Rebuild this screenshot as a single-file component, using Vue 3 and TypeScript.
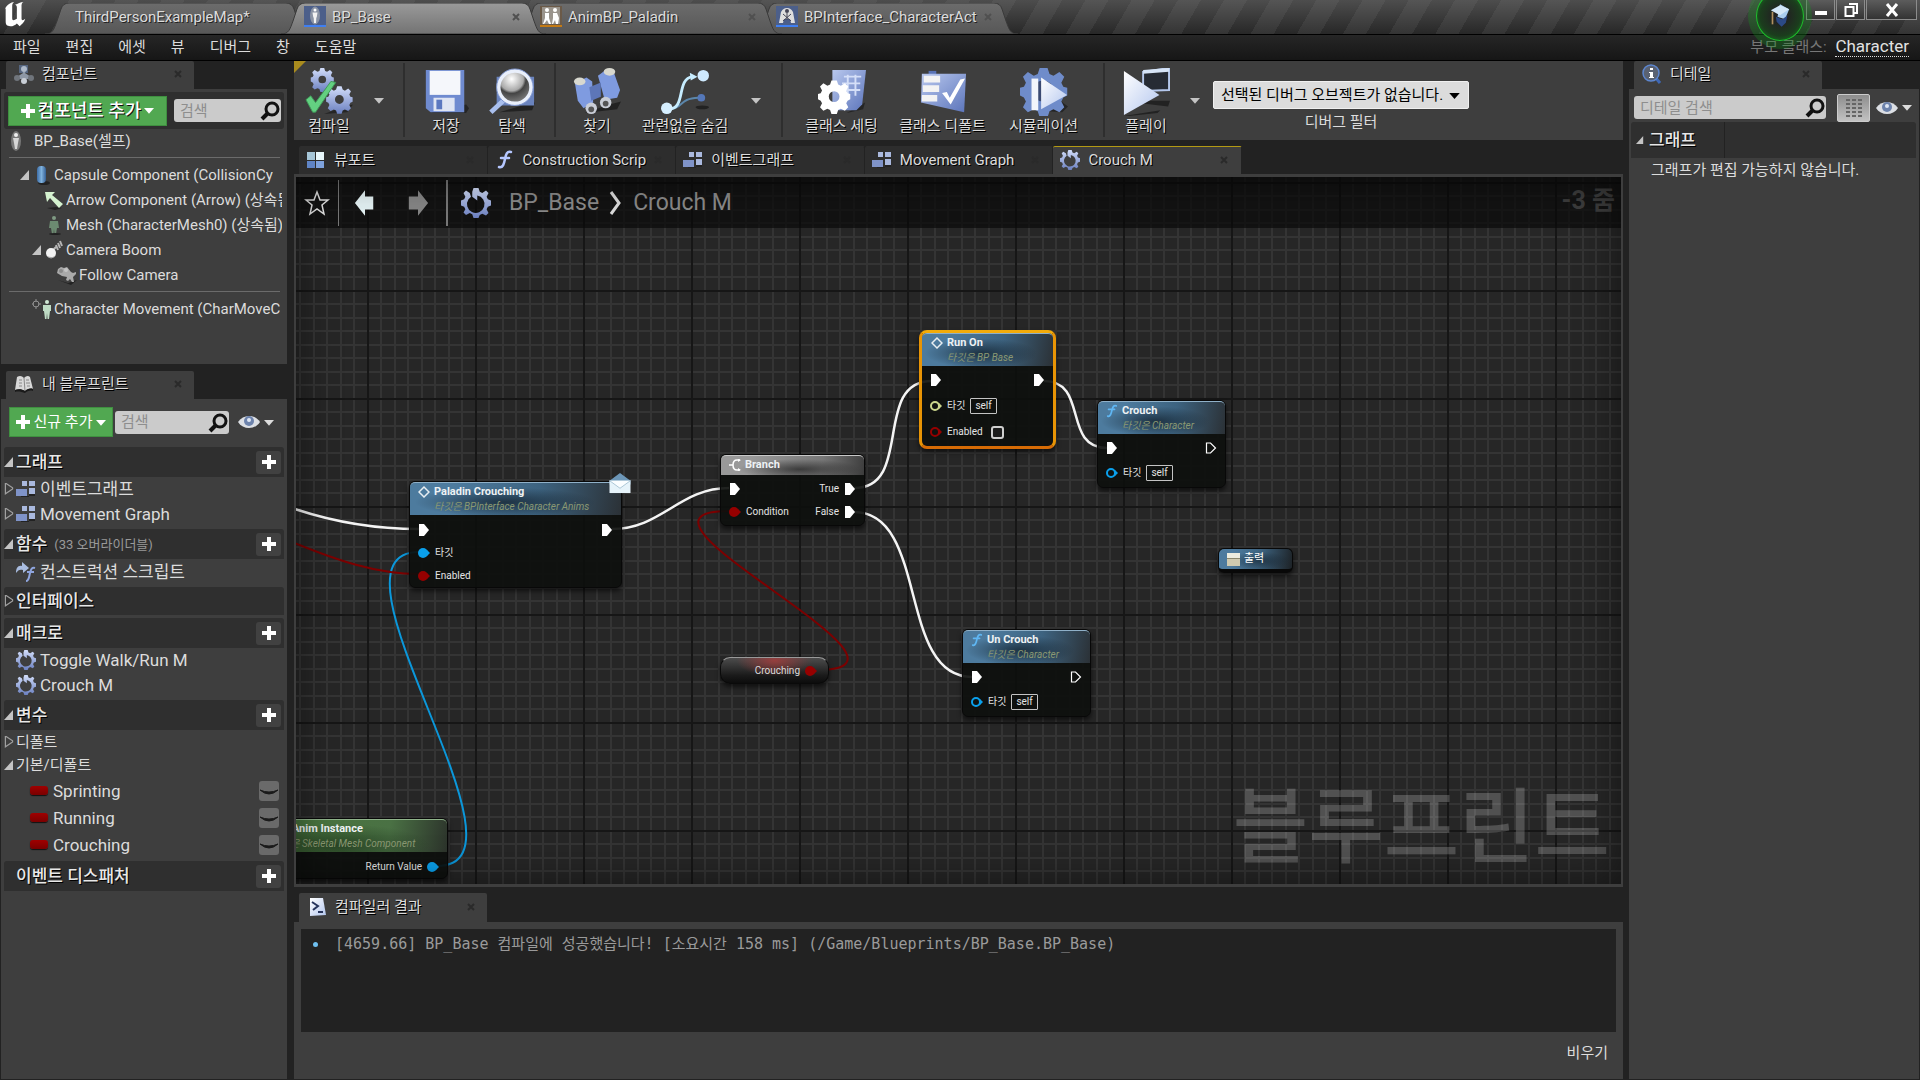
<script setup lang="ts">
import { ref } from 'vue'

interface DocTab { title: string; icon?: string; active?: boolean; closable: boolean; order: number }
interface GraphTab { title: string; icon: string; active?: boolean }
interface TreeRow { label: string; icon: string; depth: string; open?: boolean }
interface Pin { kind: string; label?: string; self?: boolean; check?: boolean }
interface PinRow { left?: Pin; right?: Pin }
interface GraphNode {
  id: string
  x: number
  y: number
  w: number
  title: string
  sub?: string
  icon?: string
  tone: string
  rows: PinRow[]
  selected?: boolean
  size: string
}

const docTabs: DocTab[] = [
  { title: 'ThirdPersonExampleMap*', closable: false, order: 4 },
  { title: 'BP_Base', icon: 'doc-blueprint', active: true, closable: true, order: 5 },
  { title: 'AnimBP_Paladin', icon: 'doc-anim', closable: true, order: 3 },
  { title: 'BPInterface_CharacterAct', icon: 'doc-interface', closable: true, order: 2 },
]

const menus: string[] = ['파일', '편집', '에셋', '뷰', '디버그', '창', '도움말']

const inherited: TreeRow[] = [
  { label: 'Capsule Component (CollisionCy', icon: 'capsule', depth: 'd1', open: true },
  { label: 'Arrow Component (Arrow) (상속됨)', icon: 'arrow', depth: 'd2' },
  { label: 'Mesh (CharacterMesh0) (상속됨)', icon: 'mesh', depth: 'd2' },
  { label: 'Camera Boom', icon: 'boom', depth: 'd2', open: true },
  { label: 'Follow Camera', icon: 'camera', depth: 'd3' },
]

const graphTabs: GraphTab[] = [
  { title: '뷰포트', icon: 'viewport' },
  { title: 'Construction Scrip', icon: 'func' },
  { title: '이벤트그래프', icon: 'graph' },
  { title: 'Movement Graph', icon: 'graph' },
  { title: 'Crouch M', icon: 'macro', active: true },
]

const variables: string[] = ['Sprinting', 'Running', 'Crouching']

const nodes: GraphNode[] = [
  {
    id: 'paladin', x: 113, y: 304, w: 213, title: 'Paladin Crouching', sub: '타깃은 BPInterface Character Anims',
    icon: 'event', tone: 'blue', size: 'compact',
    rows: [
      { left: { kind: 'exec' }, right: { kind: 'exec' } },
      { left: { kind: 'object', label: '타깃' } },
      { left: { kind: 'bool', label: 'Enabled' } },
    ],
  },
  {
    id: 'branch', x: 424, y: 277, w: 145, title: 'Branch', icon: 'branch', tone: 'grey', size: 'compact',
    rows: [
      { left: { kind: 'exec' }, right: { kind: 'exec', label: 'True' } },
      { left: { kind: 'bool', label: 'Condition' }, right: { kind: 'exec', label: 'False' } },
    ],
  },
  {
    id: 'run-on', x: 623, y: 153, w: 137, title: 'Run On', sub: '타깃은 BP Base', icon: 'event', tone: 'blue',
    size: 'tall', selected: true,
    rows: [
      { left: { kind: 'exec' }, right: { kind: 'exec' } },
      { left: { kind: 'self-open', label: '타깃', self: true } },
      { left: { kind: 'bool-open', label: 'Enabled', check: true } },
    ],
  },
  {
    id: 'crouch', x: 801, y: 223, w: 129, title: 'Crouch', sub: '타깃은 Character', icon: 'func-blue', tone: 'blue',
    size: 'tall',
    rows: [
      { left: { kind: 'exec' }, right: { kind: 'exec-open' } },
      { left: { kind: 'object-open', label: '타깃', self: true } },
    ],
  },
  {
    id: 'un-crouch', x: 666, y: 452, w: 129, title: 'Un Crouch', sub: '타깃은 Character', icon: 'func-blue',
    tone: 'blue', size: 'tall',
    rows: [
      { left: { kind: 'exec' }, right: { kind: 'exec-open' } },
      { left: { kind: 'object-open', label: '타깃', self: true } },
    ],
  },
  {
    id: 'anim', x: -49, y: 641, w: 201, title: 'Get Anim Instance', sub: '타깃은 Skeletal Mesh Component',
    icon: 'func-blue', tone: 'green', size: 'compact',
    rows: [{ right: { kind: 'object', label: 'Return Value' } }],
  },
]

const componentQuery = ref('')
const memberQuery = ref('')
const detailQuery = ref('')
const enabled = ref(false)
const debugTarget = ref('none')
</script>

<template>
  <div class="editor">
    <svg class="defs" width="0" height="0" aria-hidden="true">
      <defs>
        <linearGradient id="gBlue" x1="0" y1="0" x2="0" y2="1">
          <stop offset="0" stop-color="#d3defa" /><stop offset="1" stop-color="#6a7fc0" />
        </linearGradient>
        <linearGradient id="gIce" x1="0" y1="0" x2="1" y2="1">
          <stop offset="0" stop-color="#ffffff" /><stop offset="1" stop-color="#b3c6ee" />
        </linearGradient>
        <linearGradient id="gTab" x1="0" y1="0" x2="0" y2="1">
          <stop offset="0" stop-color="#6c6c6c" /><stop offset="1" stop-color="#575757" />
        </linearGradient>
        <linearGradient id="gTabOn" x1="0" y1="0" x2="0" y2="1">
          <stop offset="0" stop-color="#9a9a9a" /><stop offset="1" stop-color="#737373" />
        </linearGradient>
        <linearGradient id="gPaper" x1="0" y1="0" x2="1" y2="1">
          <stop offset="0" stop-color="#b9c8ee" /><stop offset="1" stop-color="#5c75bb" />
        </linearGradient>
        <radialGradient id="gLens" cx=".4" cy=".25" r=".8">
          <stop offset="0" stop-color="#fff" /><stop offset=".45" stop-color="#a9a9a9" /><stop offset=".55" stop-color="#444" /><stop offset="1" stop-color="#888" />
        </radialGradient>
        <linearGradient id="gCap" x1="0" y1="0" x2="1" y2="0">
          <stop offset="0" stop-color="#3d6ea8" /><stop offset=".5" stop-color="#7fb1dc" /><stop offset="1" stop-color="#345f94" />
        </linearGradient>
        <g id="cog">
          <path d="M10 0h4l1 3 2 1 3-2 2.500 2.500-1.500 3 1 2 2 .5v4l-2 1-1 2 1.500 3-2.500 2.500-3-1.500-2 1-1 3h-4l-1-3-2-1-3 1.500L1.500 20 3 17l-1-2-2-1v-4l2-.5 1-2-1.500-3L4 2l3 2 2-1zM12 8a4 4 0 1 0 0 8 4 4 0 0 0 0-8z" fill-rule="evenodd" />
        </g>
      </defs>
      <symbol id="unreal" viewBox="0 0 24 30">
        <path d="M1 9C3 4 8 1 11 1c-1 1-2 2-2 4v14c0 2 2 2 5 0V7c0-2-1-3-2-3 3-1 6-3 9-3-2 1-2 3-2 5v13c0 2 2 2 4 0-1 4-4 6-6 8l-3-3c-2 2-4 3-7 3-4 0-5-2-5-5V8C3 7 2 8 1 9z" fill="#fff" />
      </symbol>
      <symbol id="doc-blueprint" viewBox="0 0 22 22">
        <path d="M0 0h22v19H0z" fill="#4c5f8a" /><ellipse cx="11" cy="9.500" rx="5" ry="9" fill="#8a93a4" /><path d="M0 19h22v2H0z" fill="#3f7ff2" />
        <circle cx="11" cy="4" r="1.500" fill="#fff" /><path d="M8.500 6.500h5l-.8 5h-.4L12 17h-2l-.3-5.500h-.4z" fill="#f2f2f2" />
      </symbol>
      <symbol id="doc-anim" viewBox="0 0 22 22">
        <path d="M0 0h22v19H0z" fill="#6b5a48" /><path d="M2 1h18v17H2z" fill="#9a948c" /><path d="M0 19h22v2H0z" fill="#c47a14" />
        <circle cx="7" cy="4" r="2" fill="#fff" /><circle cx="15" cy="4" r="2" fill="#fff" /><path d="M5 7h4v5l2 6H9l-2-4-3 4H3l2-6zm8 0h4l2 5-1 6h-2l-1-4-2 4h-1l1-6z" fill="#fff" />
      </symbol>
      <symbol id="doc-interface" viewBox="0 0 22 22">
        <path d="M0 0h22v19H0z" fill="#4c5f8a" /><path d="M0 19h22v2H0z" fill="#3f7ff2" />
        <path d="M3 17l2-11c2-3 3-4 6-4s4 1 6 4l2 11h-4l-1-4h-6l-1 4z" fill="#dedede" /><circle cx="11" cy="5" r="2" fill="#445" /><path d="M7 8l8 7M15 8l-8 7M11 7v7" stroke="#445" stroke-width="1" />
      </symbol>
      <symbol id="components" viewBox="0 0 20 20">
        <path d="M5 1h9v8H5z" fill="#55657f" /><circle cx="10" cy="5" r="3" fill="#aeb9c9" /><path d="M9 8h2v9H9zM3 13l6-4h2l6 4v2H3z" fill="#8e98a6" /><circle cx="3" cy="14" r="3" fill="#70757c" /><circle cx="17" cy="14" r="3" fill="#70757c" /><circle cx="10" cy="17" r="3" fill="#c8ced6" />
      </symbol>
      <symbol id="book" viewBox="0 0 20 20">
        <path d="M1 16L3 3c3-2 5-1 7 1 2-2 4-3 6-1l3 12c-3-1-6 0-8 2-3-2-7-2-10-1z" fill="#d9d9d9" /><path d="M10 4l1 13M5 6l3 0M5 9l3 0M12 6h3M12 9h4M5 12h3M13 12h3" stroke="#888" stroke-width="1" /><path d="M1 16c3-1 7-1 10 1 2-2 5-3 8-2v2c-3-1-6 0-8 2-3-1-7-2-10-1z" fill="#1a1a1a" />
      </symbol>
      <symbol id="info" viewBox="0 0 20 20">
        <path d="M13 13l5 6" stroke="#3f68b5" stroke-width="3" /><circle cx="9" cy="9" r="8" fill="#5a6272" stroke="#5d86cf" stroke-width="1.500" /><path d="M8 8h3v5h1v1H7v-1h1V9H7V8zM8 4h3v2H8z" fill="#fff" />
      </symbol>
      <symbol id="console" viewBox="0 0 18 20">
        <path d="M2 1h13l3 17-16 1z" fill="url(#gIce)" /><path d="M4 5l6 4-5 4M10 15h5" fill="none" stroke="#26345c" stroke-width="2" />
      </symbol>
      <symbol id="person" viewBox="0 0 12 20">
        <ellipse cx="6" cy="10" rx="5" ry="10" fill="#777" /><circle cx="6" cy="4" r="2" fill="#eee" /><path d="M3 7h6l-1 5-1 6H5l-1-6z" fill="#d6d6d6" />
      </symbol>
      <symbol id="capsule" viewBox="0 0 18 20">
        <ellipse cx="11" cy="18" rx="6" ry="2" fill="#222" /><rect x="4" y="1" width="9" height="17" rx="4" fill="url(#gCap)" />
      </symbol>
      <symbol id="arrow" viewBox="0 0 18 20">
        <path d="M2 18l9-1 6 1-7 2z" fill="#222" /><path d="M0 2h10L7 5l11 9-4 4L5 8l-3 4z" fill="#d5f2d0" />
      </symbol>
      <symbol id="mesh" viewBox="0 0 18 20">
        <circle cx="9" cy="3" r="2" fill="#7f9a83" /><path d="M5 6h8l1 7h-2l-1 6H9.500L9 14l-.5 5H7l-1-6H4z" fill="#6c8a71" /><ellipse cx="10" cy="19" rx="6" ry="1" fill="#222" />
      </symbol>
      <symbol id="boom" viewBox="0 0 18 20">
        <path d="M8 10l3-3M11 5l2 5M13 3l2 5M15 1l2 5" stroke="#b5b5b5" stroke-width="2" /><circle cx="6" cy="13" r="5" fill="#f2f2f2" /><path d="M2 16a5 5 0 0 0 9-1c-2 2-5 3-9 1z" fill="#aaa" />
      </symbol>
      <symbol id="camera" viewBox="0 0 20 20">
        <path d="M1 15l10 3 9-3-6 5z" fill="#222" /><path d="M1 4l3-2 3 1 3-1 4 5 2 1 3-1v2l-3 3 1 5h-2l-2-3-2 2-2-1 1-3-5-1-5-3z" fill="#aaa" /><circle cx="4" cy="6" r="2" fill="#8a8a8a" /><circle cx="9" cy="5" r="2" fill="#c4c4c4" />
      </symbol>
      <symbol id="charmove" viewBox="0 0 20 20">
        <circle cx="4" cy="5" r="3" fill="none" stroke="#909090" stroke-width="1" /><path d="M4 0v3M4 7v3M0 5h2M6 5h3" stroke="#909090" />
        <circle cx="15" cy="3" r="2" fill="#cfe8d4" /><path d="M11 6h8l0 6h-1l-1 8h-1.500L15 14l-.5 6H13l-1-8h-1z" fill="#bfdcc5" />
      </symbol>
      <symbol id="viewport" viewBox="0 0 20 20">
        <path d="M1 2h8v8H1z" fill="#a6c6d8" /><path d="M10 2h8v8h-8z" fill="#e8f7fb" /><path d="M1 11h8v7H1z" fill="#5f84c6" /><path d="M10 11h8v7h-8z" fill="#7ea2dd" />
      </symbol>
      <symbol id="func" viewBox="0 0 18 20">
        <path d="M15 2c-4-1-5 2-6 7s-2 9-6 8M5 8h8" fill="none" stroke="#b5c7ff" stroke-width="2.500" stroke-linecap="round" />
      </symbol>
      <symbol id="func-blue" viewBox="0 0 14 16">
        <path d="M12 2C9 1 8 3 7 7s-2 8-5 7M3 6h7" fill="none" stroke="#5fb7f4" stroke-width="2" stroke-linecap="round" />
      </symbol>
      <symbol id="graph" viewBox="0 0 20 18">
        <path d="M6 1h5v5H6zM13 1h6v5h-6zM13 8h6v6h-6z" fill="#aab9de" /><path d="M0 9h11v7H0z" fill="#7f93c8" /><path d="M5 16h8v1H5zM13 14h6v2h-6z" fill="#222" />
      </symbol>
      <symbol id="construct" viewBox="0 0 20 20">
        <path d="M0 11c0-5 2-8 6-7V0l7 6-6 5V8C4 7 2 8 0 11z" fill="#a9bcdf" /><path d="M19 6c-3-1-4 1-5 5s-1 8-4 8M11 10h7" fill="none" stroke="#8fa5de" stroke-width="2" />
      </symbol>
      <symbol id="macro" viewBox="0 0 24 24">
        <path d="M10 0h4l1 3 2 1 3-2 2 2-1.500 3 1 2 2.500 1v4l-2.500 1-1 2 1.500 3-2 2-3-1.500-2 1L14 24h-4l-1-3-2-1-3 1.500-2-2L3.500 17l-1-2L0 14v-4l2.500-1 1-2L2 4l2-2 3 2 1 3-2 2a7 7 0 1 0 7-3l0 4-4-3V3z" fill="url(#gBlue)" />
      </symbol>
      <symbol id="star" viewBox="0 0 26 26">
        <path d="M13 2l3 8h8l-6 5 2 9-7-5-7 5 2-9-6-5h8z" fill="none" stroke="#e6e6e6" stroke-width="1.500" />
      </symbol>
      <symbol id="back" viewBox="0 0 24 28">
        <path d="M1 14L12 0v7h9v14h-9v7z" fill="#e4f2f4" />
      </symbol>
      <symbol id="forward" viewBox="0 0 24 28">
        <path d="M23 14L12 0v7H2v14h10v7z" fill="#868686" />
      </symbol>
      <symbol id="search" viewBox="0 0 20 20">
        <circle cx="12" cy="8" r="6" fill="none" stroke="#111" stroke-width="3" /><path d="M8 12l-6 6" stroke="#111" stroke-width="4" />
      </symbol>
      <symbol id="eye" viewBox="0 0 22 14">
        <path d="M0 7C5-1 17-1 22 7c-5 8-17 8-22 0z" fill="#dcdfe4" /><circle cx="11" cy="6" r="5" fill="#6d83ac" /><circle cx="11" cy="5" r="2" fill="#dfe8f5" />
      </symbol>
      <symbol id="plus" viewBox="0 0 14 14"><path d="M5 0h4v5h5v4H9v5H5V9H0V5h5z" fill="currentColor" /></symbol>
      <symbol id="down" viewBox="0 0 12 8"><path d="M0 1h12L6 8z" fill="currentColor" /></symbol>
      <symbol id="tri-open" viewBox="0 0 10 10"><path d="M9 0v10H0z" fill="#c4c4c4" /></symbol>
      <symbol id="tri-shut" viewBox="0 0 8 10"><path d="M1 0v9l6-4V4L1 0z" fill="none" stroke="#a0a0a0" /></symbol>
      <symbol id="close" viewBox="0 0 8 8"><path d="M1 1l6 6M7 1L1 7" stroke="currentColor" stroke-width="2" /></symbol>

      <symbol id="t-compile" viewBox="0 0 50 50">
        <path d="M20 48l24-2 6-8-10 2z" fill="#252525" /><use href="#cog" x="6" y="0" fill="url(#gBlue)" />
        <use href="#cog" transform="translate(22 19) scale(1.150)" fill="url(#gBlue)" />
        <path d="M1 33l5-4 5 7L27 14l5 1-21 31H8z" fill="#63d081" stroke="#3f9a58" />
      </symbol>
      <symbol id="t-save" viewBox="0 0 50 50">
        <path d="M8 47h38l3-5-3-4z" fill="#252525" /><path d="M4 2h40v44H9l-5-4z" fill="#6f8bd0" /><path d="M8 3h32v25H8z" fill="#f5f7fb" /><path d="M12 31h22v14H12z" fill="#dfe5f3" /><path d="M15 33h6v10h-6z" fill="#5b78c0" />
      </symbol>
      <symbol id="t-browse" viewBox="0 0 50 50">
        <path d="M12 46l34-2 3-8-10 2z" fill="#222" /><path d="M9 9h39v30H9z" fill="#6a83bd" /><path d="M17 33L3 46" stroke="#a9bfee" stroke-width="5" /><circle cx="28" cy="20" r="17" fill="url(#gLens)" stroke="#e9effb" stroke-width="4" /><circle cx="28" cy="20" r="19" fill="none" stroke="#7f97cf" />
      </symbol>
      <symbol id="t-find" viewBox="0 0 50 50">
        <path d="M12 47l34-4 4-8-12 3z" fill="#222" /><path d="M2 16l12-6 6 4 1 22-10 6-6-8z" fill="#7f9be0" /><path d="M26 8l8-6 8 1 7 20-3 8-13 2z" fill="#7f9be0" /><path d="M17 20l12-5v15l-10 4z" fill="#5d76b8" /><ellipse cx="7" cy="14" rx="6" ry="4" fill="#d8d8cf" /><ellipse cx="38" cy="4" rx="6" ry="4" fill="#d8d8cf" /><circle cx="19" cy="42" r="6" fill="#c9cdd6" /><circle cx="34" cy="36" r="6" fill="#c9cdd6" /><circle cx="19" cy="43" r="3" fill="#555" /><circle cx="34" cy="37" r="3" fill="#555" />
      </symbol>
      <symbol id="t-hide" viewBox="0 0 52 50">
        <path d="M8 43C26 42 18 32 40 31" fill="none" stroke="#5b86ab" stroke-width="2" /><ellipse cx="44" cy="41" rx="7" ry="2" fill="#222" /><path d="M8 43c20 1 8-32 26-34" fill="none" stroke="#c6ecff" stroke-width="3" /><path d="M31 5l8 4-7 4z" fill="#c6ecff" /><circle cx="45" cy="8" r="6" fill="#cfeaff" /><circle cx="7" cy="42" r="6" fill="#d6efff" /><circle cx="43" cy="31" r="4" fill="#5477b8" />
      </symbol>
      <symbol id="t-settings" viewBox="0 0 50 50">
        <path d="M30 47l17-4 2-7z" fill="#252525" /><path d="M15 2h35l-4 36-6 6H15z" fill="url(#gPaper)" /><path d="M27 9h18M25 16h19M24 23h20M31 7v22M39 7v22" stroke="#d5dff8" stroke-width="2" /><use href="#cog" transform="translate(0 13) scale(1.400)" fill="#fff" />
      </symbol>
      <symbol id="t-defaults" viewBox="0 0 50 50">
        <path d="M10 3h8v5h-8z" fill="#5872b5" /><path d="M3 6h46l-2 40L2 36z" fill="url(#gPaper)" /><path d="M5 8h17v7H5zM4 18h17v7H4zM3 28h16v7H3z" fill="#f3f3f3" /><path d="M24 26l5-1 3 6L43 12l5-1-15 27z" fill="#fff" />
      </symbol>
      <symbol id="t-sim" viewBox="0 0 50 50">
        <path d="M14 44l30 2 6-6-8-6z" fill="#252525" /><use href="#cog" transform="scale(2.050 2.050)" fill="#6f8cca" /><circle cx="24" cy="24" r="11" fill="#3a4a72" /><path d="M12 11h7v33h-7z" fill="#f2f5fb" /><path d="M22 10l27 18-27 15z" fill="url(#gIce)" />
      </symbol>
      <symbol id="t-play" viewBox="0 0 50 50">
        <path d="M22 4L49 0v23l-27 1z" fill="#262b34" stroke="#b5c8ec" stroke-width="2" /><path d="M22 2L49 0v4L22 6z" fill="#d6e4f7" /><path d="M2 50l38-6-3 3-30 3zM22 34l28 0-2 6-26-3z" fill="#222" /><path d="M2 3l37 25L2 49z" fill="url(#gIce)" />
      </symbol>

      <symbol id="event" viewBox="0 0 12 12"><path d="M6 1L1 6l5 5 5-5z" fill="none" stroke="#e8eef2" stroke-width="1.500" /></symbol>
      <symbol id="branch" viewBox="0 0 12 12"><path d="M0 6h4M11 1H8Q4 1 4 6t4 5h3" fill="none" stroke="#fff" stroke-width="1.500" /><path d="M9 0l3 1-3 2zM9 9l3 2-3 1z" fill="#fff" /></symbol>
      <symbol id="pin-exec" viewBox="0 0 12 12"><path d="M1 0h5l5 6-5 6H1z" fill="#fff" /></symbol>
      <symbol id="pin-exec-open" viewBox="0 0 12 12"><path d="M1.500 1h4l5 5-5 5h-4z" fill="none" stroke="#fff" stroke-width="1.200" /></symbol>
      <symbol id="pin-dot" viewBox="0 0 12 12"><circle cx="5" cy="6" r="5" fill="currentColor" /><path d="M9 3l3 3-3 3z" fill="currentColor" /></symbol>
      <symbol id="pin-ring" viewBox="0 0 12 12"><circle cx="5" cy="6" r="4" fill="none" stroke="currentColor" stroke-width="2" /><path d="M9 3l3 3-3 3z" fill="currentColor" /></symbol>
    </svg>

    <header class="titlebar">
      <svg class="logo" aria-label="Unreal"><use href="#unreal" /></svg>
      <nav class="doctabs">
        <div v-for="t in docTabs" :key="t.title" class="doctab" :class="{ on: t.active }" :style="{ zIndex: t.order }">
          <svg class="shape" viewBox="0 0 265 31" preserveAspectRatio="none">
            <path d="M0 31C8 31 9 26 12 18L16 6Q18 0 24 0H241Q247 0 249 6L253 18C256 26 257 31 265 31Z" :fill="t.active ? 'url(#gTabOn)' : 'url(#gTab)'" stroke="#3a3a3a" />
          </svg>
          <svg v-if="t.icon" class="docicon"><use :href="'#' + t.icon" /></svg>
          <span class="doctitle">{{ t.title }}</span>
          <button v-if="t.closable" class="x" aria-label="닫기"><svg><use href="#close" /></svg></button>
        </div>
      </nav>
      <button class="tutorial" aria-label="튜토리얼">
        <svg viewBox="0 0 24 28"><path d="M12 0l11 6-5 12-9-3z" fill="#a9cdf0" /><path d="M7 15l8 3 6-5-2 9-5 5-6-6z" fill="#2c4a86" /><path d="M3 9v15" stroke="#b09060" stroke-width="2" /><path d="M1 7l11-6 11 5-11 7z" fill="#d3e7f8" /></svg>
      </button>
      <div class="winbtns">
        <button aria-label="최소화"><svg viewBox="0 0 14 14"><path d="M1 8h12v4H1z" fill="#fff" /></svg></button>
        <button aria-label="복원"><svg viewBox="0 0 14 14"><path d="M5 1h8v9h-3M1.500 4h8v9h-8z" fill="none" stroke="#fff" stroke-width="2" /></svg></button>
        <button class="wide" aria-label="닫기"><svg viewBox="0 0 14 14"><path d="M2 1l10 12M12 1L2 13" stroke="#fff" stroke-width="3" /></svg></button>
      </div>
    </header>

    <div class="menubar">
      <nav><button v-for="m in menus" :key="m">{{ m }}</button></nav>
      <p class="parent">부모 클래스: <a href="#character">Character</a></p>
    </div>

    <main class="work">
      <aside class="left">
        <div class="ptab"><svg><use href="#components" /></svg><span>컴포넌트</span><button class="x" aria-label="닫기"><svg><use href="#close" /></svg></button></div>
        <section class="pane comps">
          <div class="addbar">
            <button class="green big"><svg><use href="#plus" /></svg>컴포넌트 추가<svg class="dn"><use href="#down" /></svg></button>
            <label class="find"><input v-model="componentQuery" type="text" placeholder="검색" aria-label="컴포넌트 검색"><svg><use href="#search" /></svg></label>
          </div>
          <div class="root"><svg><use href="#person" /></svg><span>BP_Base(셀프)</span></div>
          <hr>
          <ul class="tree">
            <li v-for="r in inherited" :key="r.label" :class="r.depth">
              <svg class="tw"><use v-if="r.open" href="#tri-open" /></svg><svg class="ic"><use :href="'#' + r.icon" /></svg><span>{{ r.label }}</span>
            </li>
          </ul>
          <hr>
          <ul class="tree">
            <li class="d1"><svg class="tw" /><svg class="ic"><use href="#charmove" /></svg><span>Character Movement (CharMoveC</span></li>
          </ul>
        </section>

        <div class="ptab second"><svg><use href="#book" /></svg><span>내 블루프린트</span><button class="x" aria-label="닫기"><svg><use href="#close" /></svg></button></div>
        <section class="pane mine">
          <div class="addbar2">
            <button class="green"><svg><use href="#plus" /></svg>신규 추가<svg class="dn"><use href="#down" /></svg></button>
            <label class="find"><input v-model="memberQuery" type="text" placeholder="검색" aria-label="블루프린트 검색"><svg><use href="#search" /></svg></label>
            <button class="eye" aria-label="보기 옵션"><svg><use href="#eye" /></svg><svg class="dn"><use href="#down" /></svg></button>
          </div>
          <div class="cat"><svg class="tw"><use href="#tri-open" /></svg><h3>그래프</h3><button aria-label="그래프 추가"><svg><use href="#plus" /></svg></button></div>
          <ul class="list pair">
            <li><svg class="tw shut"><use href="#tri-shut" /></svg><svg class="ic"><use href="#graph" /></svg>이벤트그래프</li>
            <li><svg class="tw shut"><use href="#tri-shut" /></svg><svg class="ic"><use href="#graph" /></svg>Movement Graph</li>
          </ul>
          <div class="cat"><svg class="tw"><use href="#tri-open" /></svg><h3>함수</h3><small>(33 오버라이더블)</small><button aria-label="함수 추가"><svg><use href="#plus" /></svg></button></div>
          <ul class="list one">
            <li><svg class="tw" /><svg class="ic"><use href="#construct" /></svg>컨스트럭션 스크립트</li>
          </ul>
          <div class="cat slim"><svg class="tw shut"><use href="#tri-shut" /></svg><h3>인터페이스</h3></div>
          <div class="cat"><svg class="tw"><use href="#tri-open" /></svg><h3>매크로</h3><button aria-label="매크로 추가"><svg><use href="#plus" /></svg></button></div>
          <ul class="list pair">
            <li><svg class="tw" /><svg class="ic"><use href="#macro" /></svg>Toggle Walk/Run M</li>
            <li><svg class="tw" /><svg class="ic"><use href="#macro" /></svg>Crouch M</li>
          </ul>
          <div class="cat"><svg class="tw"><use href="#tri-open" /></svg><h3>변수</h3><button aria-label="변수 추가"><svg><use href="#plus" /></svg></button></div>
          <ul class="list groups">
            <li><svg class="tw shut"><use href="#tri-shut" /></svg>디폴트</li>
            <li><svg class="tw"><use href="#tri-open" /></svg>기본/디폴트</li>
          </ul>
          <ul class="vars">
            <li v-for="v in variables" :key="v"><i /><span>{{ v }}</span><button :aria-label="v + ' 공개'"><svg viewBox="0 0 20 20"><path d="M1 9q9 8 18 0-9 4-18 0z" fill="#1a1a1a" stroke="#1a1a1a" /></svg></button></li>
          </ul>
          <div class="cat"><svg class="tw" /><h3>이벤트 디스패처</h3><button aria-label="이벤트 디스패처 추가"><svg><use href="#plus" /></svg></button></div>
        </section>
      </aside>

      <section class="center">
        <div class="toolbar">
          <div class="group first">
            <button class="tool w70"><svg><use href="#t-compile" /></svg>컴파일</button>
            <button class="more" aria-label="컴파일 옵션"><svg><use href="#down" /></svg></button>
          </div>
          <div class="group">
            <button class="tool"><svg><use href="#t-save" /></svg>저장</button>
            <button class="tool"><svg><use href="#t-browse" /></svg>탐색</button>
          </div>
          <div class="group">
            <button class="tool"><svg><use href="#t-find" /></svg>찾기</button>
            <button class="tool w110"><svg><use href="#t-hide" /></svg>관련없음 숨김</button>
            <button class="more" aria-label="숨김 옵션"><svg><use href="#down" /></svg></button>
          </div>
          <div class="group">
            <button class="tool w100"><svg><use href="#t-settings" /></svg>클래스 세팅</button>
            <button class="tool w100"><svg><use href="#t-defaults" /></svg>클래스 디폴트</button>
            <button class="tool w100"><svg><use href="#t-sim" /></svg>시뮬레이션</button>
          </div>
          <div class="group end">
            <button class="tool"><svg><use href="#t-play" /></svg>플레이</button>
            <button class="more" aria-label="플레이 옵션"><svg><use href="#down" /></svg></button>
            <div class="debug">
              <div class="selwrap">
                <select id="debug-filter" v-model="debugTarget"><option value="none">선택된 디버그 오브젝트가 없습니다.</option></select>
                <svg><use href="#down" /></svg>
              </div>
              <label for="debug-filter">디버그 필터</label>
            </div>
          </div>
        </div>

        <nav class="gtabs">
          <div v-for="g in graphTabs" :key="g.title" class="gtab" :class="{ on: g.active }">
            <svg><use :href="'#' + g.icon" /></svg><span>{{ g.title }}</span><button class="x" aria-label="닫기"><svg><use href="#close" /></svg></button>
          </div>
        </nav>

        <div class="graph">
          <svg class="wires" fill="none">
            <g stroke="#f4f4f4" stroke-width="2.500">
              <path d="M-4 331C40 346 80 352 123 352" />
              <path d="M316 352C366 352 383 311 433 311" />
              <path d="M558 311C618 311 576 204 636 204" />
              <path d="M558 335C633 335 601 500 676 500" />
              <path d="M748 204C793 204 766 271 811 271" />
            </g>
            <path d="M141 689C249 689 15 375 123 375" stroke="#0b97da" stroke-width="2" />
            <path d="M-4 365C40 383 80 397 123 397" stroke="#7c0000" stroke-width="2" />
            <path d="M521 493C655 493 299 334 433 334" stroke="#7c0000" stroke-width="2" />
          </svg>

          <article v-for="n in nodes" :key="n.id" class="node" :class="[n.tone, n.size, { selected: n.selected }]" :style="{ left: n.x + 'px', top: n.y + 'px', width: n.w + 'px' }">
            <header>
              <svg><use :href="'#' + n.icon" /></svg>
              <div><h4>{{ n.title }}</h4><p v-if="n.sub">{{ n.sub }}</p></div>
            </header>
            <div class="pins">
              <div v-for="(r, i) in n.rows" :key="i" class="prow">
                <div v-if="r.left" class="pin">
                  <svg :class="r.left.kind"><use :href="r.left.kind.startsWith('exec') ? '#pin-' + r.left.kind : r.left.kind.endsWith('open') ? '#pin-ring' : '#pin-dot'" /></svg>
                  <label v-if="r.left.check" class="chk">{{ r.left.label }}<input v-model="enabled" type="checkbox"></label>
                  <span v-else-if="r.left.label">{{ r.left.label }}</span>
                  <b v-if="r.left.self">self</b>
                </div>
                <div v-if="r.right" class="pin out">
                  <span v-if="r.right.label">{{ r.right.label }}</span>
                  <svg :class="r.right.kind"><use :href="r.right.kind.startsWith('exec') ? '#pin-' + r.right.kind : '#pin-dot'" /></svg>
                </div>
              </div>
            </div>
          </article>

          <div class="varnode"><span>Crouching</span><svg><use href="#pin-dot" /></svg></div>
          <div class="output"><i /><span>출력</span></div>
          <svg class="mail" viewBox="0 0 22 22"><path d="M0 8L11 0l11 8v4H0z" fill="#6d97b8" /><path d="M0 8h22v13H0z" fill="#e6f3fa" /><path d="M0 8l11 8 11-8" fill="#fafdff" stroke="#a9c4d4" /></svg>

          <p class="mark">블루프린트</p>

          <div class="crumbs">
            <button class="star" aria-label="즐겨찾기"><svg><use href="#star" /></svg></button>
            <button class="step" aria-label="뒤로"><svg><use href="#back" /></svg></button>
            <button class="step next" aria-label="앞으로"><svg><use href="#forward" /></svg></button>
            <svg class="kind"><use href="#macro" /></svg>
            <a href="#bp-base">BP_Base</a>
            <svg class="sep" viewBox="0 0 12 24"><path d="M2 1l8 11-8 11" fill="none" stroke="#dcdcdc" stroke-width="3" /></svg>
            <span>Crouch M</span>
            <strong>-3 줌</strong>
          </div>
        </div>

        <div class="ptab result"><svg><use href="#console" /></svg><span>컴파일러 결과</span><button class="x" aria-label="닫기"><svg><use href="#close" /></svg></button></div>
        <section class="pane log">
          <div class="lines"><p><i />[4659.66] BP_Base 컴파일에 성공했습니다! [소요시간 158 ms] (/Game/Blueprints/BP_Base.BP_Base)</p></div>
          <button>비우기</button>
        </section>
      </section>

      <aside class="right">
        <div class="ptab"><svg><use href="#info" /></svg><span>디테일</span><button class="x" aria-label="닫기"><svg><use href="#close" /></svg></button></div>
        <section class="pane details">
          <div class="dbar">
            <label class="find"><input v-model="detailQuery" type="text" placeholder="디테일 검색" aria-label="디테일 검색"><svg><use href="#search" /></svg></label>
            <button class="matrix" aria-label="프로퍼티 매트릭스"><svg viewBox="0 0 18 20"><path d="M1 1h4v2H1zM7 1h4v2H7zM13 1h4v2h-4zM1 5h4v2H1zM7 5h4v2H7zM13 5h4v2h-4zM1 9h4v2H1zM7 9h4v2H7zM13 9h4v2h-4zM1 13h4v2H1zM7 13h4v2H7zM13 13h4v2h-4zM1 17h4v2H1zM7 17h4v2H7zM13 17h4v2h-4z" fill="#666" /></svg></button>
            <button class="eye" aria-label="보기 옵션"><svg><use href="#eye" /></svg><svg class="dn"><use href="#down" /></svg></button>
          </div>
          <div class="dcat"><div class="dname"><svg class="tw"><use href="#tri-open" /></svg><h3>그래프</h3></div></div>
          <p class="note">그래프가 편집 가능하지 않습니다.</p>
        </section>
      </aside>
    </main>
  </div>
</template>

<style>
body {
  margin: 0;
  background: #222;
}
</style>

<style scoped>
* {
  box-sizing: border-box;
}
.editor {
  display: flex;
  flex-direction: column;
  height: 100vh;
  min-height: 900px;
  background: #222;
  color: #dcdcdc;
  font: 15px/20px Roboto, "Noto Sans CJK KR", sans-serif;
  white-space: nowrap;
  overflow: hidden;
}
.defs {
  position: absolute;
}
button {
  display: flex;
  align-items: center;
  justify-content: center;
  margin: 0;
  padding: 0;
  border: 0;
  background: none;
  color: inherit;
  font: inherit;
}
input,
select {
  font: inherit;
}
h3,
h4,
p,
ul {
  margin: 0;
  padding: 0;
  list-style: none;
}
svg {
  flex: none;
}
.x {
  flex: none;
  width: 10px;
  height: 10px;
  color: #2a2a2a;
}
.x svg {
  width: 8px;
  height: 8px;
}

/* title bar */
.titlebar {
  display: flex;
  flex: none;
  height: 34px;
  background:
    linear-gradient(180deg, rgba(110, 110, 110, 0.5), rgba(20, 20, 20, 0.2)),
    repeating-linear-gradient(120deg, #2c2c2c 0 20px, #3c3c3c 20px 40px);
}
.logo {
  width: 24px;
  height: 28px;
  margin: 1px 0 0 3px;
}
.doctabs {
  display: flex;
  flex: 1;
  padding: 3px 0 0 18px;
}
.doctab {
  position: relative;
  display: flex;
  align-items: center;
  width: 265px;
  height: 31px;
  margin-right: -29px;
  padding: 0 25px 4px 23px;
  text-shadow: 1px 1px 0 #222;
}
.doctab:first-child {
  padding-left: 30px;
}
.shape {
  position: absolute;
  left: 0;
  top: 0;
  width: 100%;
  height: 31px;
}
.docicon {
  z-index: 1;
  width: 22px;
  height: 22px;
  margin-right: 6px;
}
.doctitle {
  z-index: 1;
  flex: 1;
}
.doctab .x {
  z-index: 1;
  color: #505050;
}
.tutorial {
  position: relative;
  z-index: 9;
  width: 48px;
  height: 50px;
  margin: -9px 2px 0 0;
  border: 1px solid #1cc02a;
  border-radius: 50%;
  background: radial-gradient(circle, #222 20%, #1b3d1d 60%, #149a1f);
  box-shadow: 0 0 0 8px rgba(20, 150, 30, 0.3);
}
.tutorial svg {
  width: 20px;
  height: 26px;
}
.winbtns {
  display: flex;
  gap: 1px;
  padding-right: 3px;
}
.winbtns button {
  width: 29px;
  height: 20px;
  border: 1px solid #8c8c8c;
  border-top: 0;
  background: linear-gradient(#5c5c5c, #333);
}
.winbtns .wide {
  width: 51px;
}
.winbtns svg {
  width: 14px;
  height: 14px;
}

/* menu */
.menubar {
  display: flex;
  flex: none;
  justify-content: space-between;
  align-items: center;
  height: 27px;
  padding: 0 11px 2px 13px;
  border-top: 1px solid #000;
  border-bottom: 1px solid #000;
  background: linear-gradient(#262626, #161616);
}
.menubar nav {
  display: flex;
  gap: 25px;
}
.parent {
  color: #777;
}
.parent a {
  margin-left: 5px;
  border-bottom: 1px dotted #ddd;
  color: #e2e2e2;
  font-size: 17px;
  text-decoration: none;
}

/* columns */
.work {
  display: flex;
  flex: 1;
  min-height: 0;
  padding: 0 1px 1px;
}
.left {
  display: flex;
  flex: none;
  flex-direction: column;
  width: 286px;
  margin-right: 7px;
}
.center {
  display: flex;
  flex: 1;
  flex-direction: column;
  min-width: 0;
}
.right {
  display: flex;
  flex: none;
  flex-direction: column;
  width: 290px;
  margin-left: 6px;
}
.ptab {
  display: flex;
  flex: none;
  align-items: center;
  width: 188px;
  height: 28px;
  margin-left: 5px;
  padding: 0 11px 2px 8px;
  border-radius: 2px 2px 0 0;
  background: #3e3e3e;
  text-shadow: 1px 1px 0 #000;
}
.ptab > svg {
  width: 20px;
  height: 20px;
  margin-right: 8px;
}
.ptab span {
  flex: 1;
}
.pane {
  background: #3e3e3e;
}
.comps {
  flex: none;
  min-height: 275px;
  padding: 3px 3px 0;
}
.addbar {
  display: flex;
  align-items: center;
  gap: 7px;
  height: 37px;
  padding: 0 3px 0 4px;
  border-radius: 3px;
  background: #2f2f2f;
}
.green {
  gap: 4px;
  width: 104px;
  height: 30px;
  border: 1px solid #3f8f40;
  background: #51a851;
  color: #fff;
}
.green svg {
  width: 14px;
  height: 14px;
}
.green .dn {
  width: 10px;
  height: 7px;
}
.green.big {
  gap: 3px;
  width: 159px;
  font-size: 18px;
  font-weight: 500;
  text-shadow: 1px 1px 0 #111;
}
.find {
  position: relative;
  display: flex;
  flex: 1;
}
.find input {
  width: 100%;
  height: 23px;
  padding: 0 26px 0 6px;
  border: 0;
  border-radius: 3px;
  background: #cbcbcb;
  color: #222;
}
.find input::placeholder {
  color: #8e8e8e;
  opacity: 1;
}
.find svg {
  position: absolute;
  right: 1px;
  top: 2px;
  width: 20px;
  height: 20px;
}
.root {
  display: flex;
  align-items: center;
  gap: 12px;
  height: 24px;
  margin-left: 6px;
}
.root svg {
  width: 12px;
  height: 20px;
}
hr {
  height: 1px;
  margin: 4px 4px 4px 5px;
  border: 0;
  background: #6b6b6b;
}
.tree {
  padding: 0 2px;
}
.tree li {
  display: flex;
  align-items: center;
  height: 25px;
}
.tree li span {
  overflow: hidden;
}
.tree .tw {
  width: 10px;
  height: 10px;
  margin-right: 2px;
}
.tree .ic {
  width: 20px;
  height: 20px;
  margin-right: 2px;
}
.d1 {
  padding-left: 14px;
}
.d2 {
  padding-left: 26px;
}
.d3 {
  padding-left: 39px;
}
.second {
  margin-top: 7px;
}

/* my blueprint */
.mine {
  flex: 1;
  padding: 8px 3px 0;
}
.addbar2 {
  display: flex;
  align-items: center;
  height: 30px;
  margin-bottom: 10px;
  padding: 0 10px 0 5px;
}
.addbar2 .find {
  margin: 0 9px 0 2px;
}
.eye {
  gap: 4px;
  color: #dcdcdc;
}
.eye svg {
  width: 22px;
  height: 14px;
}
.eye .dn {
  width: 10px;
  height: 7px;
}
.cat {
  display: flex;
  align-items: center;
  height: 30px;
  padding-right: 3px;
  border-radius: 3px 3px 0 0;
  background: #2f2f2f;
}
.cat h3,
.dname h3 {
  color: #e8e8e8;
  font-size: 17px;
  font-weight: 500;
  text-shadow: 1px 1px 0 #000;
}
.cat small {
  margin: 2px 0 0 7px;
  color: #999;
  font-size: 13px;
}
.cat button {
  width: 25px;
  height: 23px;
  margin-left: auto;
  border-radius: 3px;
  background: #414141;
  color: #fff;
}
.cat button svg {
  width: 14px;
  height: 14px;
}
.cat .tw,
.list .tw {
  width: 10px;
  height: 10px;
  margin-right: 2px;
}
.list .shut,
.cat .shut {
  height: 12px;
}
.slim {
  height: 28px;
  margin-bottom: 3px;
}
.list li {
  display: flex;
  align-items: center;
  height: 25px;
  font-size: 17px;
}
.list .ic {
  width: 20px;
  height: 20px;
  margin-right: 4px;
}
.pair {
  height: 52px;
}
.pair li {
  padding-bottom: 1px;
}
.one {
  height: 28px;
}
.groups {
  padding-bottom: 1px;
}
.groups li {
  height: 23px;
  font-size: 15px;
}
.vars {
  padding-bottom: 3px;
}
.vars li {
  display: flex;
  align-items: center;
  height: 27px;
  padding: 0 5px 0 26px;
  font-size: 17px;
}
.vars i {
  width: 18px;
  height: 9px;
  margin-right: 5px;
  border-radius: 3px;
  background: linear-gradient(#a00000, #7a0000);
  box-shadow: 0 1px 1px #111;
}
.vars span {
  flex: 1;
}
.vars button {
  width: 20px;
  height: 20px;
  border-radius: 3px;
  background: #6a6a6a;
}
.vars svg {
  width: 20px;
  height: 20px;
}

/* toolbar */
.toolbar {
  display: flex;
  flex: none;
  height: 79px;
  background: linear-gradient(135deg, #a98b1e 8px, transparent 9px), #3e3e3e;
}
.group {
  display: flex;
  align-items: center;
  margin: 2px 0 3px;
  padding: 0 9px 0 8px;
  border-right: 2px solid #2e2e2e;
}
.first {
  padding-left: 0;
}
.first .more {
  width: 30px;
}
.group.end {
  border-right: 0;
}
.tool {
  flex-direction: column;
  width: 66px;
  height: 74px;
  padding-top: 3px;
  text-shadow: 1px 1px 0 #000;
}
.tool svg {
  width: 50px;
  height: 48px;
}
.w70 {
  width: 70px;
}
.w100 {
  width: 101px;
}
.w110 {
  width: 110px;
}
.more {
  width: 32px;
  height: 74px;
  color: #c4c4c4;
}
.more svg {
  width: 10px;
  height: 7px;
}
.debug {
  display: flex;
  flex-direction: column;
  align-items: center;
  gap: 3px;
  margin-left: 2px;
  padding-top: 12px;
}
.selwrap {
  position: relative;
  height: 28px;
}
.selwrap select {
  appearance: none;
  width: 256px;
  height: 28px;
  padding: 0 22px 0 7px;
  border: 1px solid #f0f0f0;
  border-radius: 2px;
  background: #dcdcdc;
  color: #000;
}
.selwrap svg {
  position: absolute;
  right: 9px;
  top: 11px;
  width: 11px;
  height: 7px;
  color: #000;
  pointer-events: none;
}

/* graph tabs */
.gtabs {
  display: flex;
  flex: none;
  max-width: 943px;
  margin: 6px 0 0 5px;
}
.gtab {
  display: flex;
  flex: 1;
  align-items: center;
  height: 28px;
  padding: 0 12px 2px 7px;
  border-top: 1px solid #2d2d2d;
  border-right: 1px solid #222;
  border-radius: 2px 2px 0 0;
  background: #2d2d2d;
  text-shadow: 1px 1px 0 #000;
}
.gtab.on {
  border-top-color: #b39a14;
  background: #3e3e3e;
}
.gtab > svg {
  width: 20px;
  height: 20px;
  margin-right: 8px;
}
.gtab span {
  flex: 1;
}

/* graph */
.graph {
  position: relative;
  flex: 1;
  min-height: 0;
  border: solid #3e3e3e;
  border-width: 3px 2px;
  overflow: hidden;
  background:
    linear-gradient(90deg, #161616 2px, transparent 2px) 71px 0 / 108px 108px,
    linear-gradient(#161616 2px, transparent 2px) 0 5px / 108px 108px,
    linear-gradient(90deg, #343434 2px, transparent 2px 13px, #343434 13px 15px, transparent 15px) 71px 0 / 27px 27px,
    linear-gradient(#343434 2px, transparent 2px 13px, #343434 13px 15px, transparent 15px) 0 5px / 27px 27px,
    #262626;
}
.graph::after {
  content: "";
  position: absolute;
  inset: 0;
  box-shadow: inset 0 0 40px rgba(0, 0, 0, 0.5);
  pointer-events: none;
}
.wires {
  position: absolute;
  left: 0;
  top: 0;
  width: 100%;
  height: 100%;
}
.node {
  position: absolute;
  border: 1px solid #080808;
  border-radius: 6px;
  background: rgba(13, 15, 13, 0.92);
  box-shadow: 0 3px 5px rgba(0, 0, 0, 0.6);
  color: #e4e4e4;
  font-size: 10px;
  line-height: 14px;
}
.node header {
  display: flex;
  height: 33px;
  padding: 2px 0 0 8px;
  border-top: 1px solid #8fb0c8;
  border-radius: 5px 5px 0 0;
}
.blue header {
  background:
    radial-gradient(ellipse at 45% 60%, rgba(18, 32, 44, 0.75), transparent 55%),
    linear-gradient(100deg, #4d7b9e 20%, #3d6380 60%, #2b3136);
}
.green.node {
  height: auto;
  border-color: #080808;
}
.green header {
  border-top-color: #8fb38a;
  background:
    radial-gradient(ellipse at 45% 80%, rgba(20, 40, 20, 0.6), transparent 60%),
    linear-gradient(100deg, #49753f 30%, #4a7144 70%, #2c332b);
}
.grey header {
  height: 20px;
  border-top-color: #c8c8c8;
  background:
    radial-gradient(ellipse at 55% 70%, rgba(30, 30, 30, 0.7), transparent 55%),
    linear-gradient(100deg, #999 20%, #777 70%, #3c3c3c);
}
.node header svg {
  width: 12px;
  height: 14px;
  margin-right: 4px;
}
.node h4 {
  color: #eef2f4;
  font-size: 11px;
  font-weight: 700;
  line-height: 14px;
}
.node header p {
  padding-top: 1px;
  color: #8a9872;
  font-style: italic;
}
.pins {
  padding: 3px 8px 0;
}
.grey .pins {
  padding: 2px 8px;
}
.prow {
  display: flex;
  align-items: center;
  justify-content: space-between;
  height: 23px;
}
.tall .prow {
  height: 25px;
}
.tall .pins {
  padding: 1px 8px 2px;
}
.pin {
  display: flex;
  align-items: center;
  gap: 5px;
}
.out {
  margin-left: auto;
}
.pin svg {
  width: 12px;
  height: 12px;
}
.object,
.object-open {
  color: #0aa0ec;
}
.bool,
.bool-open {
  color: #960000;
}
.self-open {
  color: #cbd68c;
}
.pin b {
  padding: 0 4px;
  border: 1px solid #c4c4c4;
  border-radius: 1px;
  font-weight: 400;
}
.chk {
  display: flex;
  align-items: center;
  gap: 8px;
}
.chk input {
  appearance: none;
  width: 13px;
  height: 13px;
  margin: 0;
  border: 2px solid #cfcfcf;
  border-radius: 3px;
  background: #1c1c1c;
}
.selected {
  border: 3px solid;
  border-color: #f2ab0a #e89405 #d66b05;
  border-radius: 8px;
}
.selected .pins {
  padding: 1px 8px;
}
.selected header {
  padding-left: 9px;
}
.selected .prow {
  height: 26px;
}
.varnode {
  position: absolute;
  left: 424px;
  top: 480px;
  display: flex;
  align-items: center;
  justify-content: flex-end;
  gap: 5px;
  width: 109px;
  height: 27px;
  padding-right: 11px;
  border: 1px solid #0a0a0a;
  border-top-color: #999;
  border-radius: 10px;
  background:
    radial-gradient(ellipse at 50% 10%, rgba(170, 60, 60, 0.8), transparent 50%),
    linear-gradient(#4c4c4c, #1a1a1a 70%, #0c0c0c);
  box-shadow: 0 3px 5px rgba(0, 0, 0, 0.6);
  font-size: 10px;
}
.varnode svg {
  width: 12px;
  height: 12px;
  color: #960000;
}
.output {
  position: absolute;
  left: 922px;
  top: 371px;
  display: flex;
  align-items: center;
  gap: 4px;
  width: 75px;
  height: 25px;
  padding-left: 8px;
  border: 1px solid #080808;
  border-bottom-width: 4px;
  border-radius: 6px;
  background:
    radial-gradient(ellipse at 55% 60%, rgba(18, 32, 44, 0.6), transparent 55%),
    linear-gradient(100deg, #4d7b9e 20%, #3d6380 55%, #1d2226);
  box-shadow: 0 3px 5px rgba(0, 0, 0, 0.6);
  color: #fff;
  font-size: 11px;
  line-height: 14px;
}
.output i {
  width: 13px;
  height: 13px;
  background: linear-gradient(#ececdf 5px, #8a866c 5px 6px, #cfcab0 6px);
}
.mail {
  position: absolute;
  left: 313px;
  top: 296px;
  width: 22px;
  height: 21px;
}
.mark {
  position: absolute;
  right: 11px;
  bottom: 14px;
  color: rgba(255, 255, 255, 0.2);
  font-size: 82px;
  font-weight: 500;
  line-height: 84px;
}
.crumbs {
  position: absolute;
  left: 0;
  right: 0;
  top: 0;
  display: flex;
  align-items: center;
  height: 51px;
  background: rgba(10, 10, 10, 0.7);
  color: #8a8a8a;
  font-size: 23px;
}
.crumbs a {
  color: inherit;
  text-decoration: none;
}
.star {
  width: 43px;
  height: 46px;
  border-right: 1px solid #777;
}
.star svg {
  width: 26px;
  height: 26px;
}
.step {
  width: 51px;
  height: 46px;
}
.step svg {
  width: 22px;
  height: 28px;
}
.next {
  width: 58px;
  border-right: 2px solid #777;
}
.kind {
  width: 30px;
  height: 30px;
  margin: 0 18px 0 13px;
}
.sep {
  width: 12px;
  height: 24px;
  margin: 0 12px 0 10px;
}
.crumbs strong {
  margin: 0 6px 4px auto;
  color: #3c3c3c;
  font-size: 25px;
}

/* compiler results */
.result {
  height: 29px;
  margin: 6px 0 0 5px;
}
.log {
  display: flex;
  flex: none;
  flex-direction: column;
  align-items: flex-end;
  height: 157px;
  padding: 7px 7px 0;
}
.lines {
  align-self: stretch;
  height: 103px;
  padding: 5px 12px;
  background: #222;
  color: #9a9a9a;
  font-family: "DejaVu Sans Mono", "Noto Sans CJK KR", monospace;
}
.lines p {
  display: flex;
  align-items: center;
}
.lines i {
  width: 5px;
  height: 5px;
  margin-right: 17px;
  border-radius: 50%;
  background: #6fc0f0;
}
.log button {
  margin: 11px 8px 0 0;
}

/* details */
.details {
  flex: 1;
  padding: 4px 3px 0 2px;
}
.dbar {
  display: flex;
  align-items: center;
  height: 29px;
  padding: 0 4px 0 3px;
}
.dbar .find {
  margin-right: 11px;
}
.matrix {
  width: 33px;
  height: 28px;
  margin-right: 6px;
  border: 1px solid #ccc;
  border-radius: 2px;
  background: linear-gradient(#8d8d8d, #c2c2c2);
}
.matrix svg {
  width: 18px;
  height: 20px;
}
.dcat {
  display: flex;
  height: 36px;
  border-radius: 3px 3px 0 0;
  background: #2f2f2f;
}
.dname {
  display: flex;
  align-items: center;
  width: 94px;
  padding-left: 5px;
  border-right: 1px solid #222;
}
.dname .tw {
  width: 8px;
  height: 10px;
  margin-right: 5px;
}
.note {
  padding: 2px 0 0 20px;
}
</style>
